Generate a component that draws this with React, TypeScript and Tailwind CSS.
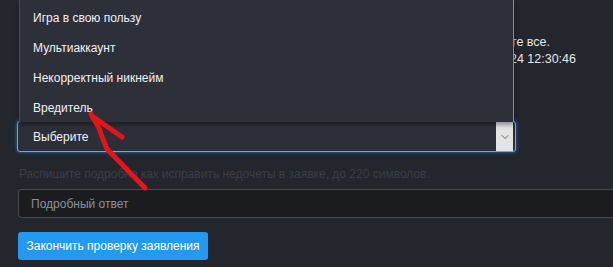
import { ChevronDown } from 'lucide-react';

const options = ['Игра в свою пользу', 'Мультиаккаунт', 'Некорректный никнейм', 'Вредитель'];

export default function App() {
  return (
    <div
      className="relative w-[613px] h-[267px] overflow-hidden bg-[#23262d] text-[12px]"
      style={{ fontFamily: '"Liberation Sans", Arial, sans-serif' }}
    >
      {/* page content under the open menu */}
      <div className="h-[121px] pt-[34px] text-[#e4e6ea] text-[12.5px] leading-[17px] whitespace-nowrap">
        <p className="w-[550px] text-right">Перед проверкой внимательно прочтите все.</p>
        <p className="w-[576px] text-right">Дата подачи заявления: 12.03.2024 12:30:46</p>
      </div>

      {/* select */}
      <div className="ml-[17px] w-[499px] h-[31px] flex items-center justify-between border border-[#5fabea] rounded-[3px] bg-[#2c2f37] shadow-[0_0_3px_1px_rgba(40,120,200,0.6)]">
        <span className="pl-[15px] text-[#f2f3f5]">Выберите</span>
        <div className="w-[17px] h-full bg-[#e3e3e3] flex items-center justify-center mr-[2px]">
          <ChevronDown size={12} strokeWidth={2} className="text-[#6b6b6b]" />
        </div>
      </div>

      <p className="mt-[14px] ml-[19px] leading-[16px] text-[#3a3e46] whitespace-nowrap">
        Распишите подробно как исправить недочеты в заявке, до 220 символов.
      </p>

      <div className="mt-[7px] ml-[18px] h-[29px] border border-[#484a4f] border-r-0 rounded-l-[4px] bg-[#1b1c20] flex items-center pl-[12px] text-[#8b9099]">
        Подробный ответ
      </div>

      <button className="mt-[14px] ml-[18px] w-[190px] h-[28px] rounded-[3px] bg-[#2299f2] text-white whitespace-nowrap flex items-center justify-center">
        Закончить проверку заявления
      </button>

      {/* open dropdown list */}
      <div className="absolute left-[19px] top-0 w-[495px] h-[122px] bg-[#2e3039] border-l border-l-[#4b4d54] border-r border-r-[#8a8a8a] shadow-[0_3px_4px_rgba(0,0,0,0.35)] pt-[3px]">
        {options.map((o) => (
          <div key={o} className="h-[30px] flex items-center pl-[13px] text-[#eef0f3]">
            {o}
          </div>
        ))}
      </div>

      {/* red arrow annotation */}
      <svg className="absolute left-0 top-0 pointer-events-none" width="613" height="267">
        <g stroke="#e3151b" strokeWidth="5" strokeLinecap="round" strokeLinejoin="round" fill="none">
          <path d="M91 114 L99 128 Q103 140 107 149 L145 188" />
          <path d="M92 116 L122 137" />
        </g>
      </svg>
    </div>
  );
}
